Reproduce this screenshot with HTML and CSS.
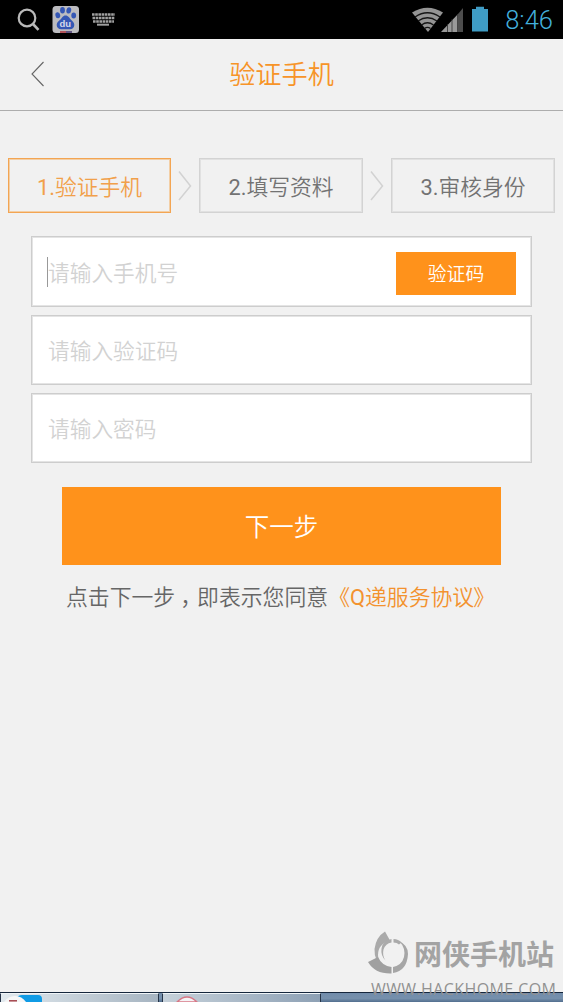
FILE: index.html
```html
<!DOCTYPE html>
<html lang="zh-CN">
<head>
<meta charset="utf-8">
<title>验证手机</title>
<link rel="stylesheet" href="styles.css">
</head>
<body>
<div class="screen">
  <div class="status">
    <svg class="status-left" width="120" height="39" viewBox="0 0 120 39">
      <g fill="none" stroke="#b9b9b9" stroke-width="2.2"><circle cx="27" cy="18" r="8.3"/><path d="M33 24l5.500 5.800" stroke-width="2.600"/></g>
      <rect x="52.500" y="6" width="26.500" height="27" rx="3.500" fill="#bcbcc0"/>
      <g fill="#3557b5">
        <ellipse cx="57.800" cy="15.300" rx="2.400" ry="3" transform="rotate(-12 57.800 15.300)"/>
        <ellipse cx="62.500" cy="10.300" rx="2.400" ry="3.200"/>
        <ellipse cx="68.800" cy="10.400" rx="2.400" ry="3.200" transform="rotate(10 68.800 10.400)"/>
        <ellipse cx="73.700" cy="15.500" rx="2.400" ry="3"/>
        <path d="M65.500 15.500c3 0 3.700 2.500 5.500 4.200 2 1.700 3.300 3 3.300 5.300 0 2.700-2 4.300-4.600 4.300h-8.400c-2.700 0-4.600-1.600-4.600-4.200 0-2.400 1.600-3.700 3.400-5.300 1.900-1.700 2.600-4.300 5.400-4.300z"/>
      </g>
      <text class="du" x="65.300" y="27">du</text>
      <path d="M60 32h6" stroke="#b23a42" stroke-width="1.600"/><path d="M66 32h6" stroke="#4a3a72" stroke-width="1.600"/>
      <g fill="none" stroke="#a0a0a0" stroke-width="2.400"><path d="M92 14.500h23M92.500 18h22" stroke-dasharray="2.600 .6"/><path d="M93 21.500h21" stroke-dasharray="2.600 .6"/><path d="M97 24.700h12" stroke-width="2"/></g>
    </svg>
    <div class="status-right">
      <svg width="80" height="39" viewBox="0 0 80 39">
        <path d="M0 12.500Q15.500 3 31 12.500L16 32z" fill="#949494"/>
        <g fill="none" stroke="#151515" stroke-width="1.300"><path d="M3 17Q15.500 8.500 28 17"/><path d="M6 21Q15.500 14.500 25 21"/><path d="M9.500 25Q15.500 20.500 21.500 25"/><path d="M12.500 28.500Q15.500 26.300 18.500 28.500"/></g>
        <path d="M29 32L46 14v18z" fill="#999"/><path d="M46 14l5-6v24h-5z" fill="#4d4d4d"/>
        <path d="M35.500 24v8M40 19v13M45.500 14v18" stroke="#303030" stroke-width=".8"/>
        <path d="M60 9h4V6.800h8V9h4v22.500H60z" fill="#3f9cc4"/>
      </svg>
      <span class="clock">8:46</span>
    </div>
  </div>
  <div class="header">
    <svg class="back" width="14" height="26" viewBox="0 0 14 26"><path d="M12.500 1L1 13l11.500 12" fill="none" stroke="#656565" stroke-width="1.100"/></svg>
    <h1 class="title">验证手机</h1>
  </div>
  <div class="steps">
    <div class="step active"><span class="number">1.</span>验证手机</div>
    <svg class="arrow" width="14" height="32" viewBox="0 0 14 32"><path d="M1 1.500L12.500 16 1 30" fill="none" stroke="#d2d2d2" stroke-width="1.500"/></svg>
    <div class="step"><span class="number">2.</span>填写资料</div>
    <svg class="arrow" width="14" height="32" viewBox="0 0 14 32"><path d="M1 1.500L12.500 16 1 30" fill="none" stroke="#d2d2d2" stroke-width="1.500"/></svg>
    <div class="step"><span class="number">3.</span>审核身份</div>
  </div>
  <div class="form">
    <div class="field phone"><span class="hint focused">请输入手机号</span><div class="code-button">验证码</div></div>
    <div class="field"><span class="hint">请输入验证码</span></div>
    <div class="field"><span class="hint">请输入密码</span></div>
  </div>
  <div class="next">下一步</div>
  <p class="agreement">点击下一步<span class="comma">，</span>即表示您同意<span class="link">《<span class="letter">Q</span>递服务协议<span class="close">》</span></span></p>
  <div class="taskbar">
    <div class="task"><svg width="60" height="8" viewBox="0 0 60 8"><path d="M16 8V4q1-3 5-3h16q4 0 4 4v3z" fill="#109be5"/><path d="M3 8Q7 2 14 2t11 6z" fill="#f6f6f6"/><path d="M8 6.800h8" stroke="#a4444c" stroke-width="1.500"/></svg></div>
    <div class="task second"><svg width="60" height="8" viewBox="0 0 60 8"><path d="M14 8Q24-2 34 8z" fill="#f5f3f5" stroke="#d77886" stroke-width="1.300"/></svg></div>
  </div>
  <div class="watermark">
    <div class="brand">
      <svg width="42" height="46" viewBox="0 0 42 46">
        <path d="M18 1.500l5 9Q11 14 11 25q0 7 5 12Q7 31 7.500 19 9 7 18 1.500z" fill="#aaa"/>
        <path d="M1 32l10-5q4 9 13.500 10v6.500Q8 44 1 32z" fill="#a0a0a0"/>
        <path d="M26 37q9-2 11-10 2-9-5-16 9 4 9 13-1 17-15 19z" fill="#a6a6a6"/>
        <path d="M24.500 9v3.500q-6 1-8 7-1.500 6 2 11-5-5-4-12 1-8 10-9.500z" fill="#aaa"/>
        <path d="M26.500 9q5 0 8 3.500l-2.500 2q-2-2-5.500-2z" fill="#aaa"/>
      </svg>
      <span class="brand-name">网侠手机站</span>
    </div>
    <div class="site">WWW.HACKHOME.COM</div>
  </div>
</div>
</body>
</html>
```
FILE: styles.css
```css
* { box-sizing: border-box; }
body { margin: 0; background: #f1f1f1; font-family: Roboto, "Noto Sans CJK SC", sans-serif; }
.screen { position: relative; display: flex; flex-direction: column; width: 563px; height: 1002px; overflow: hidden; }
.status { display: flex; justify-content: space-between; height: 39px; background: #000; }
.status svg { display: block; }
.status-right { display: flex; align-items: center; gap: 13px; padding-right: 10px; }
.clock { color: #43b0dc; font-size: 25.500px; font-weight: 350; line-height: 39px; padding-top: 2px; }
.du { fill: #d5daea; font: bold 9.500px "Liberation Sans", sans-serif; text-anchor: middle; }
.header { display: grid; grid-template-columns: 50px 1fr 50px; align-items: center; height: 72px; border-bottom: 1px solid #adadad; padding-bottom: 2px; }
.back { margin-left: 31px; }
.title { margin: 0; padding-top: 2px; text-align: center; font-size: 26.200px; font-weight: 350; line-height: 40px; color: #f79428; }
.steps { display: flex; justify-content: space-between; align-items: center; padding: 47px 8px 0; }
.step { width: 164px; height: 55px; padding-top: 2px; border: 1px solid #d3d3d3; box-shadow: inset 0 0 0 1px #e1e1e1; color: #737373; font-size: 21.800px; font-weight: 350; line-height: 53px; text-align: center; }
.step.active { width: 163px; border-color: #f3a553; box-shadow: inset 0 0 0 1px #f3cfa6; color: #f1a04a; }
.number { font-weight: 400; }
.form { display: flex; flex-direction: column; gap: 8px; padding: 23px 31px 0; }
.field { display: flex; align-items: center; height: 70px; padding: 0 15px 0 16px; border: 1px solid #cdcdcd; box-shadow: inset 0 0 0 1px #e4e4e4; background: #fff; }
.phone { height: 71px; justify-content: space-between; }
.hint { margin-top: 3px; color: #d2d2d2; font-size: 21.700px; font-weight: 350; line-height: 30px; }
.focused { height: 30px; margin: 0 0 0 -1px; border-left: 1px solid #999; line-height: 33px; }
.code-button { width: 120px; height: 43px; margin-top: 3px; padding-top: 3px; background: #ff921b; color: #fff; font-size: 18.800px; font-weight: 350; line-height: 41px; text-align: center; }
.next { width: 439px; height: 78px; margin: 24px auto 0 62px; padding-top: 2px; background: #ff921b; color: #fff; font-size: 24.500px; font-weight: 350; line-height: 77px; text-align: center; }
.agreement { margin: 17px 0 0 66px; color: #666; font-size: 21.850px; font-weight: 350; line-height: 31px; white-space: nowrap; }
.comma { padding-left: 5px; margin-right: -5px; }
.link { color: #f3922e; }
.letter { font-weight: 400; }
.close { margin-left: -1px; }
.taskbar { display: flex; gap: 3px; height: 10px; margin-top: auto; border-top: 1px solid #15263c; background: linear-gradient(#718cab, #7690ac 60%, #526e8f); }
.task { width: 159px; height: 9px; border: 1px solid #253448; border-top-color: #eff4f7; border-bottom: 0; background: linear-gradient(90deg, #e1e9ee, #a6b4c1); }
.task svg { display: block; }
.second { background: linear-gradient(90deg, #c6d1da, #8ea1b5); }
.watermark { position: absolute; left: 367px; top: 929px; width: 196px; height: 73px; }
.brand { display: flex; align-items: center; gap: 5px; height: 47px; }
.brand-name { color: #a3a3a3; font: bold 28px/46px "Noto Sans CJK SC", sans-serif; white-space: nowrap; }
.site { margin: 2px 0 0 4px; color: #929292; font: 16px/22px "Open Sans", sans-serif; letter-spacing: .4px; white-space: nowrap; }
```
